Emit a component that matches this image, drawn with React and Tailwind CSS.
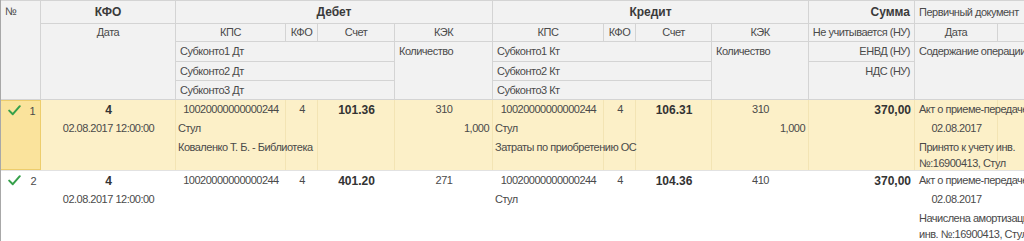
import React from 'react';

const GRID = 'grid grid-cols-[40px_135px_110px_32px_77px_98px_111px_32px_76px_97px_106px_83px_140px]';

function H({ className = '', children }) {
  return (
    <div className={`flex overflow-hidden whitespace-nowrap border-r border-b border-[#d4d4d4] bg-[#f2f2f2] px-1 ${className}`}>
      {children}
    </div>
  );
}

function C({ className = '', children }) {
  return <div className={`flex items-center overflow-hidden whitespace-nowrap ${className}`}>{children}</div>;
}

function Check() {
  return (
    <svg width="13" height="11" viewBox="0 0 13 11" className="shrink-0">
      <path d="M1.2 5.6 L4.8 9.2 L11.8 1.2" stroke="#35a04a" strokeWidth="2" fill="none" strokeLinecap="round" strokeLinejoin="round" />
    </svg>
  );
}

const colBg = [
  'col-start-2', 'col-start-3', 'col-start-4', 'col-start-5', 'col-start-6', 'col-start-7',
  'col-start-8', 'col-start-9', 'col-start-10', 'col-start-11', 'col-start-12', 'col-start-13',
];

function Row({ n, selected, r }) {
  return (
    <div className={`${GRID} grid-rows-[19px_19px_19px_13px] border-b border-[#e2e2e2] ${selected ? 'bg-[#fcf0c8]' : 'bg-white'}`}>
      {selected && colBg.map(c => (
        <div key={c} className={`${c} row-start-1 row-span-4 border-r border-[#f3e4b4]`} />
      ))}
      <div className={`col-start-1 row-start-1 row-span-4 flex items-start justify-between pl-[7px] pr-[5px] pt-[4px] ${selected ? 'bg-[#fae39c] border border-[#edcd6c] border-l-0' : ''}`}>
        <Check />
        <span className="leading-[12px]">{n}</span>
      </div>
      <C className="col-start-2 row-start-1 justify-center font-bold text-[12px] tracking-normal text-[#333]">4</C>
      <C className="col-start-2 row-start-2 justify-center">02.08.2017 12:00:00</C>

      <C className="col-start-3 row-start-1 justify-center">10020000000000244</C>
      <C className="col-start-4 row-start-1 justify-center">4</C>
      <C className="col-start-5 row-start-1 justify-center font-bold text-[12px] tracking-normal text-[#333]">{r.dSchet}</C>
      <C className="col-start-6 row-start-1 justify-center">{r.dKek}</C>
      {r.dQty && <C className="col-start-6 row-start-2 justify-end pr-1">{r.dQty}</C>}
      {r.dS1 && <C className="col-start-3 col-span-3 row-start-2 pl-[2px]">{r.dS1}</C>}
      {r.dS2 && <C className="col-start-3 col-span-3 row-start-3 pl-[2px]">{r.dS2}</C>}

      <C className="col-start-7 row-start-1 justify-center">10020000000000244</C>
      <C className="col-start-8 row-start-1 justify-center">4</C>
      <C className="col-start-9 row-start-1 justify-center font-bold text-[12px] tracking-normal text-[#333]">{r.kSchet}</C>
      <C className="col-start-10 row-start-1 justify-center">{r.kKek}</C>
      {r.kQty && <C className="col-start-10 row-start-2 justify-end pr-1">{r.kQty}</C>}
      {r.kS1 && <C className="col-start-7 col-span-3 row-start-2 pl-[2px]">{r.kS1}</C>}
      {r.kS2 && <C className="col-start-7 col-span-3 row-start-3 pl-[2px]">{r.kS2}</C>}

      <C className="col-start-11 row-start-1 justify-end pr-1 font-bold text-[12px] tracking-normal text-[#333]">370,00</C>

      <C className="col-start-12 col-span-2 row-start-1 pl-1">Акт о приеме-передаче</C>
      <C className="col-start-12 row-start-2 justify-center">02.08.2017</C>
      <div className="col-start-12 col-span-2 row-start-3 row-span-2 whitespace-nowrap pl-1 pt-[1px] leading-[16px]">
        {r.doc1}<br />{r.doc2}
      </div>
    </div>
  );
}

export default function App() {
  const rows = [
    {
      n: 1, selected: true,
      dSchet: '101.36', dKek: '310', dQty: '1,000', dS1: 'Стул', dS2: 'Коваленко Т. Б. - Библиотека',
      kSchet: '106.31', kKek: '310', kQty: '1,000', kS1: 'Стул', kS2: 'Затраты по приобретению ОС',
      doc1: 'Принято к учету инв.', doc2: '№:16900413, Стул',
    },
    {
      n: 2, selected: false,
      dSchet: '401.20', dKek: '271',
      kSchet: '104.36', kKek: '410', kS1: 'Стул',
      doc1: 'Начислена амортизация ОС', doc2: 'инв. №:16900413, Стул',
    },
  ];

  return (
    <div className="w-[1024px] h-[241px] overflow-hidden bg-white font-['Liberation_Sans',Arial,sans-serif] text-[11px] tracking-[-0.5px] text-[#4a4a4a]">
      <div className="w-max border-l border-[#a8a8a8]">
        <div className={`${GRID} grid-rows-[23px_18px_20px_19px_19px] border-t border-[#d4d4d4]`}>
          <H className="col-start-1 row-start-1 row-span-5 items-start pt-[4px] leading-[12px]">№</H>
          <H className="col-start-2 row-start-1 items-center justify-center font-bold text-[12px] tracking-normal text-[#3a3a3a]">КФО</H>
          <H className="col-start-2 row-start-2 row-span-4 items-start justify-center leading-[17px]">Дата</H>

          <H className="col-start-3 col-span-4 row-start-1 items-center justify-center font-bold text-[12px] tracking-normal text-[#3a3a3a]">Дебет</H>
          <H className="col-start-3 row-start-2 items-center justify-center">КПС</H>
          <H className="col-start-4 row-start-2 items-center justify-center">КФО</H>
          <H className="col-start-5 row-start-2 items-center justify-center">Счет</H>
          <H className="col-start-6 row-start-2 items-center justify-center">КЭК</H>
          <H className="col-start-3 col-span-3 row-start-3 items-center">Субконто1 Дт</H>
          <H className="col-start-3 col-span-3 row-start-4 items-center">Субконто2 Дт</H>
          <H className="col-start-3 col-span-3 row-start-5 items-center">Субконто3 Дт</H>
          <H className="col-start-6 row-start-3 row-span-3 items-start leading-[19px]">Количество</H>

          <H className="col-start-7 col-span-4 row-start-1 items-center justify-center font-bold text-[12px] tracking-normal text-[#3a3a3a]">Кредит</H>
          <H className="col-start-7 row-start-2 items-center justify-center">КПС</H>
          <H className="col-start-8 row-start-2 items-center justify-center">КФО</H>
          <H className="col-start-9 row-start-2 items-center justify-center">Счет</H>
          <H className="col-start-10 row-start-2 items-center justify-center">КЭК</H>
          <H className="col-start-7 col-span-3 row-start-3 items-center">Субконто1 Кт</H>
          <H className="col-start-7 col-span-3 row-start-4 items-center">Субконто2 Кт</H>
          <H className="col-start-7 col-span-3 row-start-5 items-center">Субконто3 Кт</H>
          <H className="col-start-10 row-start-3 row-span-3 items-start leading-[19px]">Количество</H>

          <H className="col-start-11 row-start-1 items-center justify-end font-bold text-[12px] tracking-normal text-[#3a3a3a]">Сумма</H>
          <H className="col-start-11 row-start-2 items-center justify-end">Не учитывается (НУ)</H>
          <H className="col-start-11 row-start-3 items-center justify-end">ЕНВД (НУ)</H>
          <H className="col-start-11 row-start-4 row-span-2 items-start justify-end leading-[18px]">НДС (НУ)</H>

          <H className="col-start-12 col-span-2 row-start-1 items-center">Первичный документ</H>
          <H className="col-start-12 row-start-2 items-center justify-center">Дата</H>
          <H className="col-start-13 row-start-2 items-center" />
          <H className="col-start-12 col-span-2 row-start-3 row-span-3 items-start leading-[19px]">Содержание операции</H>
        </div>
        {rows.map(r => (
          <Row key={r.n} n={r.n} selected={r.selected} r={r} />
        ))}
      </div>
    </div>
  );
}
